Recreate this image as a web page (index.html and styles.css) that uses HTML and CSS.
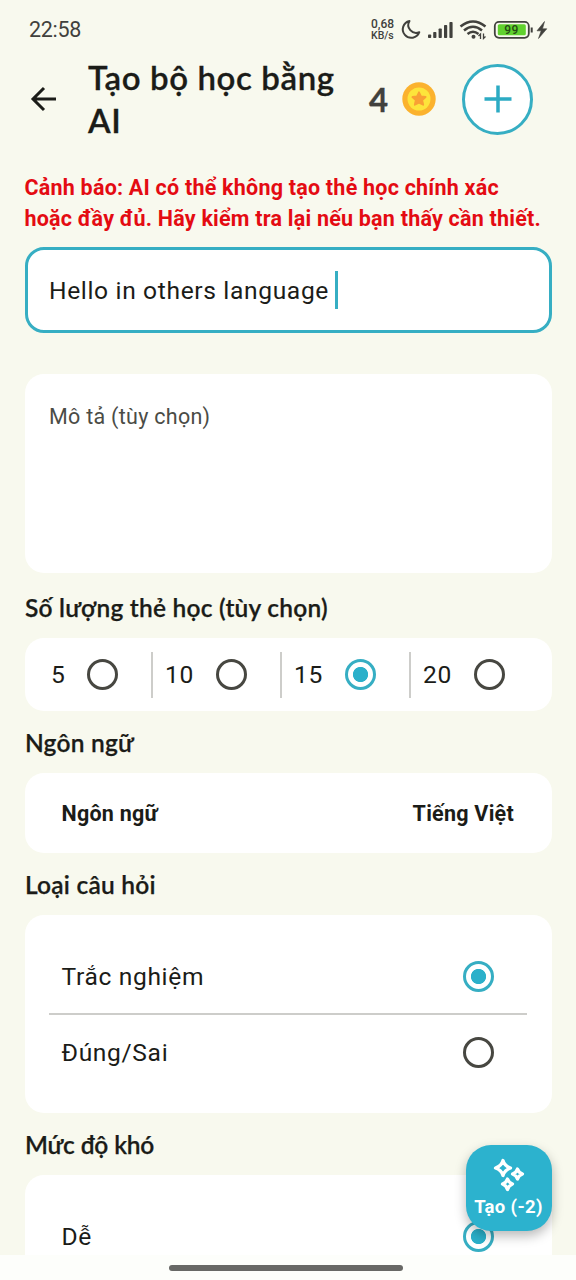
FILE: index.html
```html
<!DOCTYPE html>
<html lang="vi">
<head>
<meta charset="utf-8">
<title>Tạo bộ học bằng AI</title>
<link rel="stylesheet" href="styles.css">
</head>
<body>
<div class="screen">
  <header class="status">
    <span class="clock">22:58</span>
    <div class="net"><span>0,68</span><span class="unit">KB/s</span></div>
    <svg class="indicators" width="152" height="24" viewBox="0 0 152 24">
      <path d="M9.500 3 A8.500 8.500 0 1 0 19.300 14.200 A7.800 7.800 0 0 1 9.500 3Z" fill="none" stroke="#41413d" stroke-width="2" stroke-linejoin="round"/>
      <g fill="#41413d"><rect x="28" y="16.5" width="3.2" height="3.5" rx=".8"/><rect x="33.2" y="14" width="3.2" height="6" rx=".8"/><rect x="38.6" y="10.5" width="3.2" height="9.500" rx=".8"/><rect x="44" y="7" width="3.2" height="13" rx=".8"/><rect x="49.400" y="4" width="3.2" height="16" rx=".8"/></g>
      <g fill="none" stroke="#41413d" stroke-width="2.500"><path d="M60.500 8.500Q73 -1.500 85.500 8.500"/><path d="M64 12.500Q73 5 82 12.500"/><path d="M67.500 16Q73 11.500 78.500 16"/></g>
      <circle cx="73.500" cy="18.700" r="2" fill="#41413d"/>
      <path d="M80.500 21v-5l-2 2M83.500 15.500v5l2-2" fill="none" stroke="#41413d" stroke-width="1.300"/>
      <rect x="94.800" y="3.800" width="34" height="16" rx="4.200" fill="none" stroke="#41413d" stroke-width="1.800"/>
      <rect x="97.800" y="6.300" width="28" height="11" rx="1.500" fill="#60d12e"/>
      <rect x="130.700" y="9.500" width="2" height="5" fill="#41413d"/>
      <text class="charge" x="111.500" y="16" text-anchor="middle">99</text>
      <path d="M144.500 3.500 L137 12.800 H141.200 L138.500 20.500 L146.800 10.800 H142.500 Z" fill="#41413d" stroke="#41413d" stroke-width=".6"/>
    </svg>
  </header>

  <div class="appbar">
    <svg class="back" width="28" height="28" viewBox="0 0 28 28"><path d="M15 3 4 14 15 25M4 14H27" fill="none" stroke="#1b1c18" stroke-width="3"/></svg>
    <h1 class="title">Tạo bộ học bằng<br>AI</h1>
    <span class="coins">4</span>
    <svg class="coin" width="34" height="34" viewBox="0 0 34 34">
      <circle cx="17" cy="17" r="16.700" fill="#fbb22e"/><circle cx="17" cy="17" r="11.500" fill="#fde43b"/>
      <path d="M17 10.300 19 14.500 23.600 15 20.200 18.200 21.200 22.800 17 20.600 12.800 22.800 13.800 18.200 10.400 15 15 14.500Z" fill="#f9a034" stroke="#f9a034" stroke-width="1.800" stroke-linejoin="round"/>
    </svg>
    <button class="add" aria-label="Thêm"><svg width="28" height="28" viewBox="0 0 28 28"><path d="M14 .5V27.500M.5 14H27.500" stroke="#2cabc3" stroke-width="3.500"/></svg></button>
  </div>

  <main class="content">
    <p class="warning">Cảnh báo: AI có thể không tạo thẻ học chính xác<br>hoặc đầy đủ. Hãy kiểm tra lại nếu bạn thấy cần thiết.</p>
    <div class="field"><span>Hello in others language</span><i class="caret"></i></div>
    <div class="area">Mô tả (tùy chọn)</div>

    <h2 class="heading count">Số lượng thẻ học (tùy chọn)</h2>
    <div class="card counts">
      <div class="option"><span>5</span><i class="radio"></i></div>
      <div class="option"><span>10</span><i class="radio"></i></div>
      <div class="option"><span>15</span><i class="radio on"></i></div>
      <div class="option"><span>20</span><i class="radio"></i></div>
    </div>

    <h2 class="heading">Ngôn ngữ</h2>
    <div class="card language"><span>Ngôn ngữ</span><span>Tiếng Việt</span></div>

    <h2 class="heading">Loại câu hỏi</h2>
    <div class="card types">
      <div class="row"><span>Trắc nghiệm</span><i class="radio on"></i></div>
      <div class="row"><span>Đúng/Sai</span><i class="radio"></i></div>
    </div>

    <h2 class="heading difficulty">Mức độ khó</h2>
    <div class="card level"><div class="row"><span>Dễ</span><i class="radio on"></i></div></div>
  </main>

  <footer class="nav"><i class="handle"></i></footer>

  <button class="fab">
    <svg width="32" height="34" viewBox="0 0 32 34" fill="none" stroke="#fff" stroke-width="3.300" stroke-linejoin="round"><path d="M10 2.500Q11.500 8 17.500 10Q11.500 12 10 17.500Q8.500 12 2.500 10Q8.500 8 10 2.500Z"/><path d="M24.500 11Q25.500 14.500 29.500 16Q25.500 17.500 24.500 21Q23.500 17.500 19.500 16Q23.500 14.500 24.500 11Z"/><path d="M14.500 21Q15.500 24.500 19.500 26Q15.500 27.500 14.500 31.500Q13.500 27.500 9.500 26Q13.500 24.500 14.500 21Z"/></svg>
    <span>Tạo (-2)</span>
  </button>
</div>
</body>
</html>
```
FILE: styles.css
```css
* { box-sizing: border-box; }
body { margin: 0; font-family: Roboto, "Noto Sans", sans-serif; color: #1b1c18; }
button { font: inherit; padding: 0; }
.screen { position: relative; width: 576px; height: 1280px; overflow: hidden; background: #f8f9ee; display: flex; flex-direction: column; }

.status { height: 56px; flex: none; display: flex; align-items: center; padding: 3px 24px 0 29px; color: #41413d; }
.clock { font-size: 21.500px; width: 342px; letter-spacing: -.3px; }
.net { display: flex; flex-direction: column; font-size: 12px; line-height: 11px; font-weight: 500; width: 29px; white-space: nowrap; }
.net .unit { font-size: 10.500px; }
.indicators { flex: none; }
.charge { font: 500 12px Roboto, sans-serif; fill: #244a14; letter-spacing: .4px; }

.appbar { height: 86px; flex: none; display: flex; align-items: center; padding-left: 29px; }
.back { width: 28px; margin-right: 31px; }
.title { margin: 0; width: 281px; font: 600 33px/43px Lato, "Noto Sans", sans-serif; letter-spacing: .6px; -webkit-text-stroke: .3px; white-space: nowrap; }
.coins { width: 33px; font: 700 33px/40px Lato, sans-serif; color: #41413d; -webkit-text-stroke: .3px; }
.coin { margin-right: 26px; }
.add { width: 71px; height: 71px; border-radius: 50%; border: 3px solid #36aec3; background: #fff; display: grid; place-items: center; }

.content { flex: 1; min-height: 0; overflow: hidden; padding: 30px 24.500px 0; }
.warning { margin: 0 0 13px; color: #e40b12; font-size: 21.500px; font-weight: 700; line-height: 31px; letter-spacing: .22px; white-space: nowrap; }
.field { height: 86px; border: 3px solid #36aec3; border-radius: 19px; background: #fff; padding-left: 21.500px; display: flex; align-items: center; font-size: 24.600px; letter-spacing: .64px; }
.caret { width: 3px; height: 38px; margin-left: 6px; background: #36aec3; }
.area { height: 199px; margin-top: 41px; border-radius: 19px; background: #fff; padding: 28px 24.500px; font-size: 21.500px; line-height: 30px; letter-spacing: .28px; color: #4b4c46; }
.heading { margin: 0; height: 62px; padding-left: .5px; font: 600 24.500px/64px Lato, "Noto Sans", sans-serif; letter-spacing: .22px; -webkit-text-stroke: .25px; white-space: nowrap; }
.heading.count { height: 65px; line-height: 69px; }
.heading.difficulty { letter-spacing: -.15px; }
.card { border-radius: 19px; background: #fff; }

.counts { height: 73px; display: flex; align-items: center; padding: 0 0 0 13.500px; }
.option { width: 129px; height: 46px; display: flex; align-items: center; justify-content: space-between; padding: 0 33.500px 0 12px; font-size: 24.600px; letter-spacing: .6px; border-left: 2px solid #cdcdca; }
.option:first-child { width: 113px; padding-left: 13px; border: 0; }
.radio { width: 31px; height: 31px; flex: none; border: 3px solid #474741; border-radius: 50%; }
.radio.on { border-color: #36aec3; background: radial-gradient(circle, #2bb0ca 7.200px, transparent 8px); }

.language { height: 80px; display: flex; align-items: center; justify-content: space-between; padding: 0 37.500px 0 37px; font-size: 21.500px; font-weight: 700; letter-spacing: .25px; }
.types { height: 198px; padding: 24px 24.500px; }
.row { height: 75px; display: flex; align-items: center; justify-content: space-between; padding: 0 33.500px 0 12.500px; font-size: 24.600px; letter-spacing: .65px; }
.types .row:first-child { height: 76px; border-bottom: 2px solid #cdcdca; }
.types .row:last-child { height: 74px; }
.level { height: 120px; padding: 24px 24.500px; }

.nav { height: 25px; flex: none; background: #fdfefb; display: flex; justify-content: center; padding: 10px 4px 0 0; }
.handle { width: 234px; height: 6px; border-radius: 3px; background: #686866; }
.fab { position: absolute; left: 465.500px; top: 1145px; width: 86px; height: 86px; border: 0; border-radius: 25px; background: #2cb2ce; color: #fff; box-shadow: 0 5px 12px rgba(0,0,0,.28); display: flex; flex-direction: column; align-items: center; padding-top: 13px; gap: 2px; }
.fab span { font-size: 18.500px; line-height: 26px; font-weight: 700; letter-spacing: .35px; white-space: nowrap; }
```
